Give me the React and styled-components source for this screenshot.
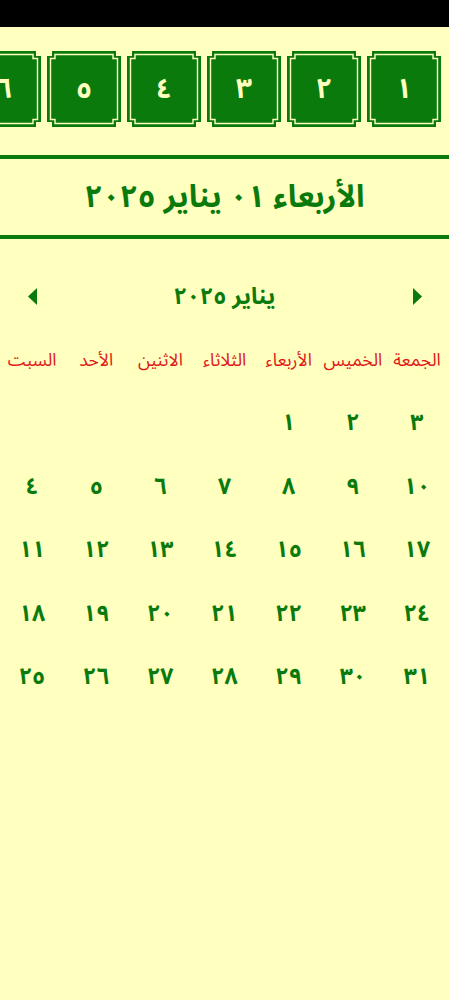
import React from "react";
import styled, { createGlobalStyle } from "styled-components";

const GREEN = "#0a7a0c";
const CREAM = "#ffffc0";
const RED = "#e01818";

const GlobalStyle = createGlobalStyle`
  html, body { margin: 0; padding: 0; background: ${CREAM}; }
  body {
    font-family: "Noto Sans Arabic", "Noto Kufi Arabic", "DejaVu Sans", sans-serif;
    direction: rtl;
  }
  * { box-sizing: border-box; }
`;

const Page = styled.div`
  width: 449px;
  min-height: 1000px;
  background: ${CREAM};
  overflow: hidden;
`;

const StatusBar = styled.div`
  height: 27px;
  background: #000;
`;

const TileStrip = styled.div`
  display: flex;
  flex-direction: row;
  gap: 6px;
  margin-top: 24px;
  padding-right: 8px;
  height: 76px;
  overflow: hidden;
`;

const Tile = styled.div`
  position: relative;
  flex: 0 0 74px;
  height: 76px;
  display: flex;
  align-items: center;
  justify-content: center;
`;

const TileFrame = styled.svg`
  position: absolute;
  inset: 0;
  width: 100%;
  height: 100%;
`;

const TileNumber = styled.span`
  position: relative;
  top: 1px;
  color: ${CREAM};
  font-weight: 700;
  font-size: 28px;
  line-height: 1;
`;

const Divider = styled.div`
  height: 4px;
  background: ${GREEN};
  margin-top: ${(p) => p.$top || 0}px;
`;

const TitleBlock = styled.div`
  height: 76px;
  display: flex;
  align-items: center;
  justify-content: center;
  color: ${GREEN};
  font-weight: 700;
  font-size: 31px;
`;

const MonthNav = styled.div`
  display: grid;
  grid-template-columns: 64px 1fr 64px;
  align-items: center;
  height: 34px;
  margin-top: 33px;
`;

const MonthLabel = styled.div`
  text-align: center;
  color: ${GREEN};
  font-weight: 700;
  font-size: 23px;
`;

const ArrowButton = styled.div`
  display: flex;
  align-items: center;
  justify-content: center;
`;

const WeekGrid = styled.div`
  display: grid;
  grid-template-columns: repeat(7, 1fr);
`;

const WeekdayRow = styled(WeekGrid)`
  margin-top: 36px;
  height: 26px;
  align-items: center;
`;

const Weekday = styled.div`
  text-align: center;
  color: ${RED};
  font-size: 17.5px;
  white-space: nowrap;
`;

const DaysGrid = styled(WeekGrid)`
  margin-top: 43px;
  grid-auto-rows: 63.5px;
`;

const DayCell = styled.div`
  display: flex;
  justify-content: center;
  align-items: flex-start;
  color: ${GREEN};
  font-weight: 700;
  font-size: 23px;
  line-height: 1;
`;

const toArabic = (n) =>
  String(n).replace(/[0-9]/g, (d) => "٠١٢٣٤٥٦٧٨٩"[d]);

function Frame() {
  const n = 5;
  const outer = `M${n},0 H${74 - n} V${n} H74 V${76 - n} H${74 - n} V76 H${n} V${76 - n} H0 V${n} H${n} Z`;
  const i = 3.5;
  const m = 8;
  const inner = `M${m},${i} H${74 - m} V${m - 0.5} H${74 - i} V${76 - m + 0.5} H${74 - m} V${76 - i} H${m} V${76 - m + 0.5} H${i} V${m - 0.5} H${m} Z`;
  return (
    <TileFrame viewBox="0 0 74 76" preserveAspectRatio="none">
      <path d={outer} fill={GREEN} />
      <path d={inner} fill="none" stroke={CREAM} strokeWidth="1.4" />
    </TileFrame>
  );
}

function Triangle({ dir }) {
  const d = dir === "left" ? "M0,8.5 L9,0 L9,17 Z" : "M9,8.5 L0,0 L0,17 Z";
  return (
    <svg width="9" height="17" viewBox="0 0 9 17">
      <path d={d} fill={GREEN} />
    </svg>
  );
}

const weekdays = ["الجمعة", "الخميس", "الأربعاء", "الثلاثاء", "الاثنين", "الأحد", "السبت"];

export default function App() {
  const firstRow = [3, 2, 1, null, null, null, null];
  const rows = [];
  for (let r = 0; r < 4; r++) {
    const start = 4 + r * 7;
    const row = [];
    for (let c = 0; c < 7; c++) row.push(start + 6 - c);
    rows.push(row);
  }
  const grid = [...firstRow, ...rows.flat()];

  return (
    <Page>
      <GlobalStyle />
      <StatusBar />
      <TileStrip>
        {Array.from({ length: 6 }, (_, k) => (
          <Tile key={k}>
            <Frame />
            <TileNumber>{toArabic(k + 1)}</TileNumber>
          </Tile>
        ))}
      </TileStrip>
      <Divider $top={28} />
      <TitleBlock>الأربعاء ٠١ يناير ٢٠٢٥</TitleBlock>
      <Divider />
      <MonthNav>
        <ArrowButton><Triangle dir="right" /></ArrowButton>
        <MonthLabel>يناير ٢٠٢٥</MonthLabel>
        <ArrowButton><Triangle dir="left" /></ArrowButton>
      </MonthNav>
      <WeekdayRow>
        {weekdays.map((w) => (
          <Weekday key={w}>{w}</Weekday>
        ))}
      </WeekdayRow>
      <DaysGrid>
        {grid.map((d, k) => (
          <DayCell key={k}>{d ? toArabic(d) : ""}</DayCell>
        ))}
      </DaysGrid>
    </Page>
  );
}
